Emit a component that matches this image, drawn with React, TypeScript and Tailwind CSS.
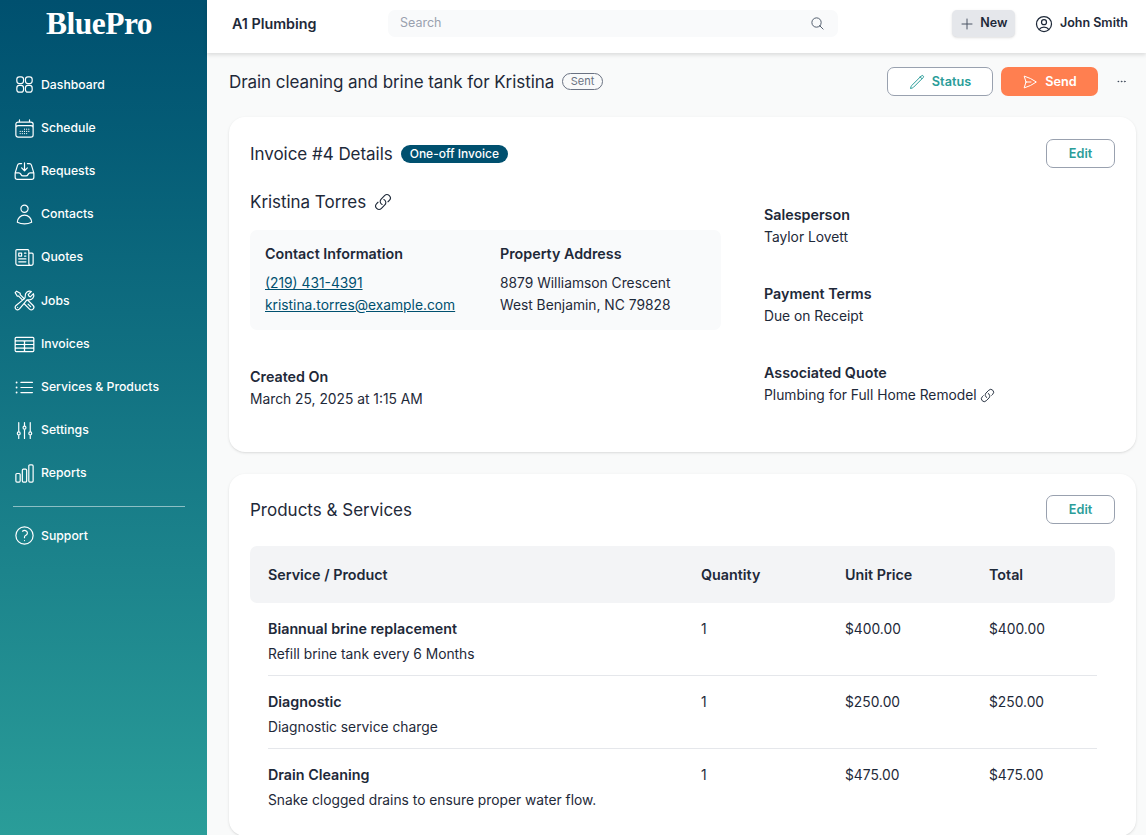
import * as React from 'react';
import {
  HiOutlineAdjustmentsVertical,
  HiOutlineCalendarDays,
  HiOutlineChartBar,
  HiOutlineEllipsisHorizontal,
  HiOutlineInboxArrowDown,
  HiOutlineLink,
  HiOutlineListBullet,
  HiOutlineMagnifyingGlass,
  HiOutlineNewspaper,
  HiOutlinePaperAirplane,
  HiOutlinePencil,
  HiOutlinePlus,
  HiOutlineQuestionMarkCircle,
  HiOutlineTableCells,
  HiOutlineUser,
  HiOutlineUserCircle,
  HiOutlineWrenchScrewdriver,
} from 'react-icons/hi2';

const DashboardIcon = ({ className }: { className?: string }) => (
  <svg viewBox="0 0 24 24" fill="none" stroke="currentColor" className={className}>
    <rect x="4" y="4" width="7" height="7" rx="2.6" />
    <rect x="13" y="4" width="7" height="7" rx="2.6" />
    <rect x="4" y="13" width="7" height="7" rx="2.6" />
    <rect x="13" y="13" width="7" height="7" rx="2.6" />
  </svg>
);

const NAV_LINKS: { icon: React.ElementType; label: string }[] = [
  { icon: DashboardIcon, label: 'Dashboard' },
  { icon: HiOutlineCalendarDays, label: 'Schedule' },
  { icon: HiOutlineInboxArrowDown, label: 'Requests' },
  { icon: HiOutlineUser, label: 'Contacts' },
  { icon: HiOutlineNewspaper, label: 'Quotes' },
  { icon: HiOutlineWrenchScrewdriver, label: 'Jobs' },
  { icon: HiOutlineTableCells, label: 'Invoices' },
  { icon: HiOutlineListBullet, label: 'Services & Products' },
  { icon: HiOutlineAdjustmentsVertical, label: 'Settings' },
  { icon: HiOutlineChartBar, label: 'Reports' },
];

const LINE_ITEMS = [
  { name: 'Biannual brine replacement', desc: 'Refill brine tank every 6 Months', qty: '1', price: '$400.00', total: '$400.00' },
  { name: 'Diagnostic', desc: 'Diagnostic service charge', qty: '1', price: '$250.00', total: '$250.00' },
  { name: 'Drain Cleaning', desc: 'Snake clogged drains to ensure proper water flow.', qty: '1', price: '$475.00', total: '$475.00' },
];

const NavItem = ({ icon: Icon, label }: { icon: React.ElementType; label: string }) => (
  <a href="#" className="flex h-[43.2px] items-center gap-[5px] pl-[13px] text-[12.25px] font-medium text-white">
    <Icon className="h-[23px] w-[23px] shrink-0 stroke-[1.25]" />
    <span>{label}</span>
  </a>
);

const EditButton = () => (
  <button className="h-[29px] w-[69px] rounded-[7px] border border-gray-400 bg-white text-[12.7px] font-semibold text-[#2a9d99]">
    Edit
  </button>
);

const Sidebar = () => (
  <aside className="flex h-[835px] w-[207px] shrink-0 flex-col bg-gradient-to-b from-[#00506f] to-[#2a9d99]">
    <div className="flex h-[63.3px] justify-center pt-[5px] pr-[9px]">
      <span className="font-['Liberation_Serif',serif] text-[31.5px] leading-[38px] font-bold tracking-[-0.5px] text-white">BluePro</span>
    </div>
    <nav className="flex flex-col">
      {NAV_LINKS.map((link) => (
        <NavItem key={link.label} icon={link.icon} label={link.label} />
      ))}
    </nav>
    <div className="mx-[13px] mt-[11px] mb-[7px] w-[172px] border-t border-white/50" />
    <NavItem icon={HiOutlineQuestionMarkCircle} label="Support" />
  </aside>
);

const Header = () => (
  <header className="relative z-10 flex h-[53px] shrink-0 items-center bg-white pr-[18px] pb-[6px] shadow-[0_2px_4px_rgba(0,0,0,0.12)]">
    <div className="w-[181px] pl-[25px] text-[14.3px] font-semibold text-gray-800">A1 Plumbing</div>
    <div className="flex h-[27px] w-[450px] items-center justify-between rounded-[7px] bg-gray-50 pr-[13px] pl-[12px]">
      <span className="text-[12.5px] text-gray-400">Search</span>
      <HiOutlineMagnifyingGlass className="h-[15px] w-[15px] text-gray-600" />
    </div>
    <button className="ml-auto flex h-[27px] w-[63px] items-center justify-center gap-[5px] rounded-[5px] bg-gray-200 text-[12.5px] font-semibold text-gray-800 shadow-sm">
      <HiOutlinePlus className="h-[16px] w-[16px] text-gray-600" />
      New
    </button>
    <div className="ml-[19px] flex items-center gap-[6px] text-[12.5px] font-semibold text-gray-800">
      <HiOutlineUserCircle className="h-[20px] w-[20px]" />
      John Smith
    </div>
  </header>
);

const Field = ({ label, children }: { label: string; children: React.ReactNode }) => (
  <div className="text-[13.8px] leading-[22px] text-gray-800">
    <div className="text-[14.3px] font-semibold">{label}</div>
    <div>{children}</div>
  </div>
);

const InvoiceDetails = () => (
  <section className="h-[335px] rounded-[16px] bg-white px-[21px] pt-[22px] shadow-sm">
    <div className="flex items-center justify-between">
      <div className="flex items-center gap-[8px]">
        <h2 className="pt-[2px] text-[17px] font-[430] tracking-[-0.04px] text-gray-800">Invoice #4 Details</h2>
        <span className="rounded-full bg-[#00506f] px-[9px] text-[12px] leading-[18px] font-medium text-white">One-off Invoice</span>
      </div>
      <EditButton />
    </div>
    <div className="mt-[20px] flex">
      <div className="w-[471px]">
        <div className="flex items-center gap-[8px] text-[17px] leading-[28px] font-[430] tracking-[-0.04px] text-gray-800">
          Kristina Torres
          <HiOutlineLink className="h-[18px] w-[18px]" />
        </div>
        <div className="mt-[14px] flex h-[100px] rounded-[7px] bg-gray-50 px-[15px] pt-[13px] text-[13.8px] leading-[22px] text-gray-800">
          <div className="w-[235px]">
            <div className="mb-[7px] text-[14.3px] font-semibold">Contact Information</div>
            <div className="text-[#00506f] underline">(219) 431-4391</div>
            <div className="text-[#00506f] underline">kristina.torres@example.com</div>
          </div>
          <div>
            <div className="mb-[7px] text-[14.3px] font-semibold">Property Address</div>
            <div>8879 Williamson Crescent</div>
            <div>West Benjamin, NC 79828</div>
          </div>
        </div>
        <div className="mt-[36px]">
          <Field label="Created On">March 25, 2025 at 1:15 AM</Field>
        </div>
      </div>
      <div className="ml-[43px] flex flex-col gap-[35px] pt-[16px]">
        <Field label="Salesperson">Taylor Lovett</Field>
        <Field label="Payment Terms">Due on Receipt</Field>
        <Field label="Associated Quote">
          <span className="flex items-center gap-[3px]">
            Plumbing for Full Home Remodel
            <HiOutlineLink className="h-[15px] w-[15px]" />
          </span>
        </Field>
      </div>
    </div>
  </section>
);

const ProductsTable = () => (
  <section className="rounded-[16px] bg-white px-[21px] pt-[21px] pb-[14px] shadow-sm">
    <div className="flex items-center justify-between">
      <h2 className="pt-[2px] text-[17px] font-[430] text-gray-800">Products &amp; Services</h2>
      <EditButton />
    </div>
    <div className="mt-[22px] flex h-[57px] items-center rounded-[7px] bg-gray-100 px-[18px] text-[14.3px] font-semibold text-gray-800">
      <div className="w-[433px]">Service / Product</div>
      <div className="w-[144px]">Quantity</div>
      <div className="w-[144px]">Unit Price</div>
      <div>Total</div>
    </div>
    <div className="px-[18px]">
      {LINE_ITEMS.map((item) => (
        <div key={item.name} className="flex h-[73px] border-b border-gray-200 pt-[13px] text-[13.8px] leading-[25px] text-gray-800 last:border-b-0">
          <div className="w-[433px]">
            <div className="text-[14.3px] font-semibold">{item.name}</div>
            <div className="pt-px">{item.desc}</div>
          </div>
          <div className="w-[144px] pt-px">{item.qty}</div>
          <div className="w-[144px] pt-px">{item.price}</div>
          <div className="pt-px">{item.total}</div>
        </div>
      ))}
    </div>
  </section>
);

const App = () => (
  <div className="flex h-[835px] overflow-hidden bg-[#f9fafa] font-['Inter',sans-serif]">
    <Sidebar />
    <div className="flex min-w-0 flex-1 flex-col">
      <Header />
      <main className="flex flex-col pr-[10px] pl-[22px]">
        <div className="flex h-[64px] items-center pb-[7px]">
          <h1 className="pt-[2px] text-[17px] font-[430] tracking-[-0.06px] text-gray-800">Drain cleaning and brine tank for Kristina</h1>
          <span className="ml-[8px] rounded-full border border-gray-500 px-[7.5px] text-[11px] leading-[15px] text-gray-500">Sent</span>
          <button className="ml-auto flex h-[29px] w-[106px] items-center justify-center gap-[7px] rounded-[7px] border border-gray-400 bg-white text-[12.7px] font-semibold text-[#2a9d99]">
            <HiOutlinePencil className="h-[16px] w-[16px]" />
            Status
          </button>
          <button className="ml-[8px] flex h-[29px] w-[97px] items-center justify-center gap-[7px] rounded-[7px] bg-[#ff7f50] text-[12.7px] font-semibold text-white">
            <HiOutlinePaperAirplane className="h-[16px] w-[16px]" />
            Send
          </button>
          <HiOutlineEllipsisHorizontal className="mr-[8px] ml-[17px] h-[13px] w-[13px] text-gray-700" />
        </div>
        <div className="flex flex-col gap-[22px]">
          <InvoiceDetails />
          <ProductsTable />
        </div>
      </main>
    </div>
  </div>
);

export default App;
